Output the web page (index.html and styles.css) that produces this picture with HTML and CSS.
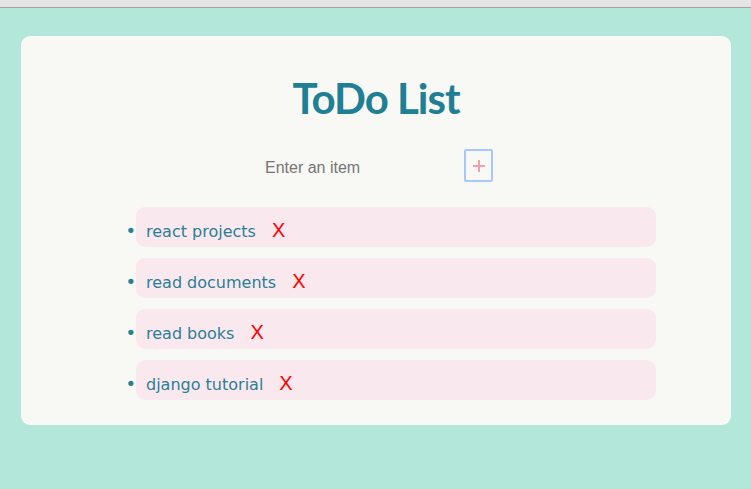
FILE: index.html
```html
<!DOCTYPE html>
<html lang="en">
<head>
<meta charset="utf-8">
<title>ToDo List</title>
<link rel="stylesheet" href="styles.css">
</head>
<body>
<div class="topbar"></div>
<main class="page">
  <section class="card">
    <h1 class="title">ToDo List</h1>
    <form class="add-row">
      <input class="add-input" type="text" placeholder="Enter an item">
      <button class="add-btn" type="button" aria-label="Add">
        <svg width="14" height="14" viewBox="0 0 14 14"><path d="M7 1v12M1 7h12" stroke="#f5a0ad" stroke-width="2" fill="none"/></svg>
      </button>
    </form>
    <ul class="items">
      <li class="item"><span class="item-text">react projects</span><span class="del">X</span></li>
      <li class="item"><span class="item-text">read documents</span><span class="del">X</span></li>
      <li class="item"><span class="item-text">read books</span><span class="del">X</span></li>
      <li class="item"><span class="item-text">django tutorial</span><span class="del">X</span></li>
    </ul>
  </section>
</main>
</body>
</html>
```

FILE: styles.css
```css
* { box-sizing: border-box; }
html, body { margin: 0; padding: 0; }
body {
  background: #b3e7da;
  height: 489px;
  overflow: hidden;
  font-family: "DejaVu Sans", sans-serif;
}
.topbar {
  height: 8px;
  background: #e4e4e4;
  border-bottom: 1px solid #a2a2a2;
}
.page {
  padding: 28px 20px 0 21px;
}
.card {
  background: #f8f8f4;
  border-radius: 9px;
  padding: 36px 0 25px;
  display: flex;
  flex-direction: column;
  align-items: center;
}
.title {
  margin: 0;
  font-family: Lato, sans-serif;
  font-weight: 700;
  font-size: 42px;
  letter-spacing: -1px;
  line-height: 52px;
  color: #1f7f95;
}
.add-row {
  margin: 25px 0 0 4px;
  display: flex;
  align-items: center;
  height: 33px;
}
.add-input {
  width: 201px;
  height: 24px;
  margin-top: 5px;
  border: none;
  background: transparent;
  padding: 0 2px;
  font-family: "Liberation Sans", Arial, sans-serif;
  font-size: 16px;
  color: #333;
  outline: none;
}
.add-input::placeholder { color: #767676; }
.add-btn {
  width: 29px;
  height: 33px;
  border: 2px solid #a6c7ff;
  border-radius: 2px;
  background: transparent;
  padding: 0;
  display: flex;
  align-items: center;
  justify-content: center;
}
.items {
  margin: 25px 0 0;
  padding: 0 0 0 40px;
  width: 560px;
  color: #2a7f93;
}
.item {
  display: list-item;
  height: 40px;
  margin-bottom: 11px;
  background: #fae8ef;
  border-radius: 9px;
  padding: 6px 0 0 10px;
  line-height: 34px;
  font-size: 16px;
}
.item:last-child { margin-bottom: 0; }
.item::marker { content: "•"; color: #2a7f93; font-size: 18px; }
.item-text { font-weight: 400; }
.del {
  margin-left: 16px;
  color: #ff0000;
  font-family: "Liberation Sans", Arial, sans-serif;
  font-size: 20px;
}
```
